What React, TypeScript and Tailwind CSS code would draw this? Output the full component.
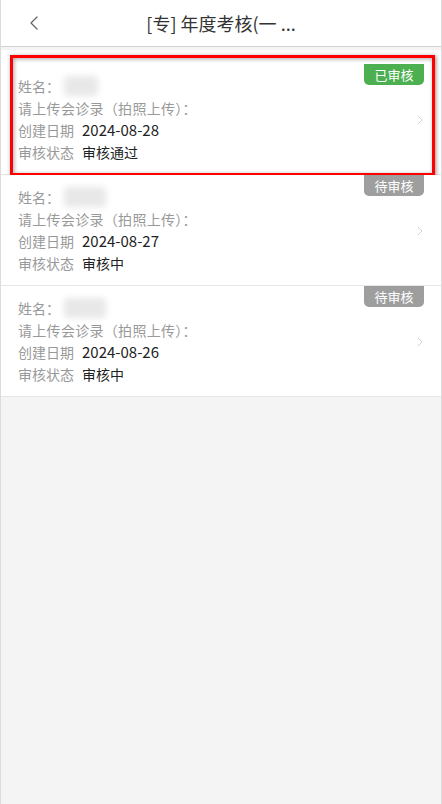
import { ChevronLeft, ChevronRight } from 'lucide-react';

type Record = {
    date: string;
    status: string;
    badge: string;
    approved: boolean;
    blurWidth: string;
};

const records: Record[] = [
    { date: '2024-08-28', status: '审核通过', badge: '已审核', approved: true, blurWidth: 'w-[34px]' },
    { date: '2024-08-27', status: '审核中', badge: '待审核', approved: false, blurWidth: 'w-[42px]' },
    { date: '2024-08-26', status: '审核中', badge: '待审核', approved: false, blurWidth: 'w-[42px]' },
];

function RecordItem({ item, highlighted }: { item: Record; highlighted?: boolean }) {
    return (
        <div className={`relative bg-white border-b border-[#e6e6e6] pl-[17px] pr-4 pb-[11px] flex items-center ${highlighted ? 'pt-[25px]' : 'pt-[11px]'}`}>
            <div className="flex-1 text-[14px] leading-[22px]">
                <div className="flex items-center text-[#999]">
                    <span>姓名：</span>
                    <span className={`${item.blurWidth} h-[20px] bg-[#e8e8e8] blur-[3px] rounded-sm ml-1`}></span>
                </div>
                <div className="text-[#999] tracking-[0.3px]">请上传会诊录（拍照上传）：</div>
                <div className="flex items-center">
                    <span className="text-[#999] w-[64px]">创建日期</span>
                    <span className="text-[#222] text-[15px]">{item.date}</span>
                </div>
                <div className="flex items-center">
                    <span className="text-[#999] w-[64px]">审核状态</span>
                    <span className="text-[#222]">{item.status}</span>
                </div>
            </div>
            <ChevronRight className="w-4 h-4 text-[#cccccc] -mr-[3px] mt-[2px]" strokeWidth={1.3} />
            <span
                className={`absolute right-[17px] ${highlighted ? 'top-[14px]' : 'top-0'} w-[60px] h-[21px] flex items-center justify-center text-[13px] text-white rounded-b-[5px] ${item.approved ? 'bg-[#4caf50]' : 'bg-[#9e9e9e]'}`}
            >
                {item.badge}
            </span>
            {highlighted && (
                <div className="absolute left-[9px] right-[6px] top-[5px] -bottom-[2px] border-[3px] border-[#ff0000] shadow-[1px_1px_4px_rgba(0,0,0,0.45),inset_1px_1px_4px_rgba(0,0,0,0.35)] pointer-events-none"></div>
            )}
        </div>
    );
}

export default function App() {
    return (
        <div
            className="min-h-screen w-[442px] bg-[#f4f4f4] border-x border-[#dcdcdc] flex flex-col"
            style={{ fontFamily: '"Noto Sans CJK SC", "Noto Sans", sans-serif' }}
        >
            <div className="h-[47px] bg-white border-b border-[#d2d2d2] flex items-center relative">
                <ChevronLeft className="w-6 h-6 text-[#666] absolute left-[21px]" strokeWidth={1.3} />
                <div className="flex-1 text-center text-[18px] text-[#333]">[专] 年度考核(一 ...</div>
            </div>
            <div className="mt-[3px]">
                {records.map((item, i) => (
                    <RecordItem key={item.date} item={item} highlighted={i === 0} />
                ))}
            </div>
        </div>
    );
}
